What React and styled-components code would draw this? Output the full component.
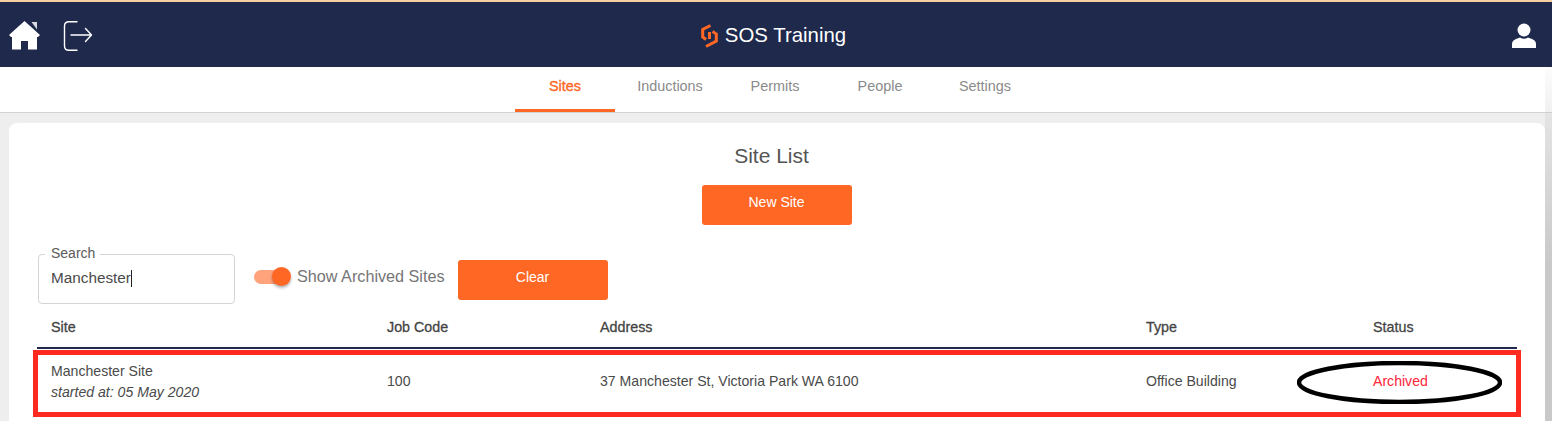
import React from 'react'
import styled, { createGlobalStyle } from 'styled-components'

// Styles ==================================
const Global = createGlobalStyle`
  html, body { margin: 0; padding: 0; background: #eeeeee; overflow: hidden; }
  body { font-family: "Liberation Sans", Arial, sans-serif; color: #4a4a4a; }
`
const Page = styled.div`
  position: relative;
  width: 1552px;
  height: 421px;
  overflow: hidden;
`
const EdgeShade = styled.div`
  position: absolute;
  top: 67px;
  right: 0;
  bottom: 0;
  width: 7px;
  background: linear-gradient(to bottom, rgba(200, 200, 200, 0.05), #c9c9c9 55%);
`
const TopBar = styled.header`
  height: 65px;
  background: #1e294c;
  border-top: 2px solid #f5cf9f;
  display: grid;
  grid-template-columns: 1fr auto 1fr;
  align-items: center;
  padding: 0 16px 0 9px;
`
const BarLeft = styled.div`
  display: flex;
  align-items: center;
  gap: 23px;
  padding-top: 2px;
`
const Brand = styled.div`
  display: flex;
  align-items: center;
  gap: 7px;
  color: #fff;
  font-size: 20.4px;
  margin-left: 2px;
  padding-top: 2px;
`
const BarRight = styled.div`
  display: flex;
  justify-content: flex-end;
  padding-top: 2px;
`
const Tabs = styled.nav`
  height: 45px;
  background: #fff;
  border-bottom: 1px solid #d2d2d2;
  display: flex;
  justify-content: center;
  gap: 5px;
  padding-right: 2px;
`
const Tab = styled.div`
  width: 100px;
  box-sizing: border-box;
  text-align: center;
  font-size: 14.4px;
  line-height: 38px;
  color: ${p => (p.$active ? '#ff6725' : '#8a8a8a')};
  -webkit-text-stroke: ${p => (p.$active ? '0.35px #ff6725' : '0')};
  border-bottom: 3px solid ${p => (p.$active ? '#ff6725' : 'transparent')};
  height: 45px;
`
const Card = styled.main`
  margin: 10px 7px 0 9px;
  background: #fff;
  border-radius: 8px 8px 0 0;
  height: 300px;
  box-sizing: border-box;
  padding-top: 21px;
  display: flex;
  flex-direction: column;
`
const Title = styled.h1`
  margin: 0;
  text-align: center;
  font-size: 21px;
  font-weight: 400;
  line-height: 24px;
  padding-right: 11px;
  color: #555;
`
const OrangeButton = styled.button`
  width: 150px;
  height: 40px;
  border: 0;
  border-radius: 3px;
  background: #ff6725;
  color: #fff;
  font: 400 14px "Liberation Sans", Arial, sans-serif;
  padding: 0 0 6px;
`
const TitleAction = styled.div`
  display: flex;
  justify-content: center;
  margin: 17px 0 0 -1px;
`
const Filters = styled.div`
  display: flex;
  align-items: flex-start;
  margin: 29px 0 0 29px;
`
const SearchBox = styled.fieldset`
  width: 197px;
  height: 57px;
  box-sizing: border-box;
  margin: -7px 0 0;
  padding: 0 0 0 6px;
  border: 1px solid #d4d4d4;
  border-radius: 4px;
  legend {
    padding: 0 5px 2px 6px;
    font-size: 14px;
    line-height: 12px;
    color: #5a5a5a;
  }
`
const SearchValue = styled.div`
  display: flex;
  align-items: center;
  font-size: 15.3px;
  line-height: 20px;
  margin: 7px 0 0 6px;
  color: #4a4a4a;
`
const Caret = styled.span`
  width: 1px;
  height: 17px;
  background: #222;
`
const Toggle = styled.div`
  margin: 16px 0 0 19px;
  position: relative;
  width: 36px;
  height: 14px;
  border-radius: 7px;
  background: #ffa37c;
  &::after {
    content: '';
    position: absolute;
    right: -1px;
    top: -3px;
    width: 19px;
    height: 19px;
    border-radius: 50%;
    background: #ff6725;
    box-shadow: 0 2px 3px rgba(0, 0, 0, 0.3);
  }
`
const ToggleLabel = styled.span`
  margin: 12px 0 0 7px;
  font-size: 16.2px;
  line-height: 20px;
  color: #757575;
`
const FilterAction = styled.div`
  margin: 6px 0 0 13px;
`
const HeadRow = styled.div`
  margin: 8px 28px 0 28px;
  height: 35px;
  border-bottom: 2px solid #1e294c;
  display: grid;
  grid-template-columns: 336px 213px 546px 227px 1fr;
  align-items: start;
  padding-left: 14px;
  font-size: 14.3px;
  line-height: 18px;
  color: #444;
  -webkit-text-stroke: 0.3px #444;
  & > div { padding-top: 6px; }
`
const BodyRow = styled.div`
  position: relative;
  margin: 1px 24px 0 24px;
  height: 67px;
  box-sizing: border-box;
  border: 5px solid #ff2a1f;
  display: grid;
  grid-template-columns: 336px 213px 546px 227px 1fr;
  align-items: center;
  padding: 0 0 5px 13px;
  font-size: 14.1px;
  color: #4a4a4a;
`
const SiteCell = styled.div`
  line-height: 21px;
  padding-top: 2px;
  em { display: block; font-style: italic; }
`
const Archived = styled.span`
  color: #ff2438;
`
const Ring = styled.svg`
  position: absolute;
  left: 1259px;
  top: 6px;
`

// Icons ===================================
const HomeIcon = () =>
  <svg width="31" height="29" viewBox="0 0 31 29" fill="#fff">
    <path d="M15.5 0 L31 14 L29 16 H28 V28.5 H19 V20 H12 V28.5 H3 V16 H2 L0 14 Z" />
    <path d="M22.5 1 H28 V8.5 Z" fill="#d8dbe2" />
  </svg>

const LogoutIcon = () =>
  <svg width="30" height="30" viewBox="0 0 30 30" fill="none" stroke="#fff" strokeWidth="1.4" strokeLinecap="round" strokeLinejoin="round">
    <path d="M14 .75 H6 Q1.5 .75 1.5 5 V25 Q1.5 29.25 6 29.25 H14" />
    <path d="M8 14 H28.5 M22.5 7.5 L28.5 14 L22.5 20.5" />
  </svg>

const LogoMark = () =>
  <svg width="17" height="24" viewBox="0 0 17 24" fill="none" stroke="#ff6725" strokeWidth="3">
    <path d="M9.5 1.5 L1.7 5.5 V13 L5 15.5" />
    <path d="M5 22.5 L15.3 17 V10 L11.5 7.5" />
    <path d="M8.5 8 V15" />
  </svg>

const UserIcon = () =>
  <svg width="24" height="25" viewBox="0 0 24 25" fill="#fff">
    <circle cx="12" cy="7" r="6.5" />
    <path d="M0 25 V21 Q0 17.5 4 16 L8 14.5 Q12 17 16 14.5 L20 16 Q24 17.5 24 21 V25 Z" />
  </svg>

// =========================================
const tabs = ['Sites', 'Inductions', 'Permits', 'People', 'Settings']
const columns = ['Site', 'Job Code', 'Address', 'Type', 'Status']

const App = () =>
  <Page>
    <Global />
    <TopBar>
      <BarLeft>
        <HomeIcon />
        <LogoutIcon />
      </BarLeft>
      <Brand>
        <LogoMark />
        SOS Training
      </Brand>
      <BarRight>
        <UserIcon />
      </BarRight>
    </TopBar>
    <Tabs>
      {tabs.map((t, i) =>
        <Tab key={t} $active={i === 0}>
          {t}
        </Tab>
      )}
    </Tabs>
    <Card>
      <Title>Site List</Title>
      <TitleAction>
        <OrangeButton>New Site</OrangeButton>
      </TitleAction>
      <Filters>
        <SearchBox>
          <legend>Search</legend>
          <SearchValue>Manchester<Caret /></SearchValue>
        </SearchBox>
        <Toggle />
        <ToggleLabel>Show Archived Sites</ToggleLabel>
        <FilterAction>
          <OrangeButton>Clear</OrangeButton>
        </FilterAction>
      </Filters>
      <HeadRow>
        {columns.map(c => <div key={c}>{c}</div>)}
      </HeadRow>
      <BodyRow>
        <SiteCell>
          Manchester Site
          <em>started at: 05 May 2020</em>
        </SiteCell>
        <div>100</div>
        <div>37 Manchester St, Victoria Park WA 6100</div>
        <div>Office Building</div>
        <Archived>Archived</Archived>
        <Ring width="205" height="43" viewBox="0 0 205 43" fill="none">
          <ellipse cx="102.5" cy="21.5" rx="100.5" ry="19.5" stroke="#000" strokeWidth="4.5" />
        </Ring>
      </BodyRow>
    </Card>
    <EdgeShade />
  </Page>

export default App
